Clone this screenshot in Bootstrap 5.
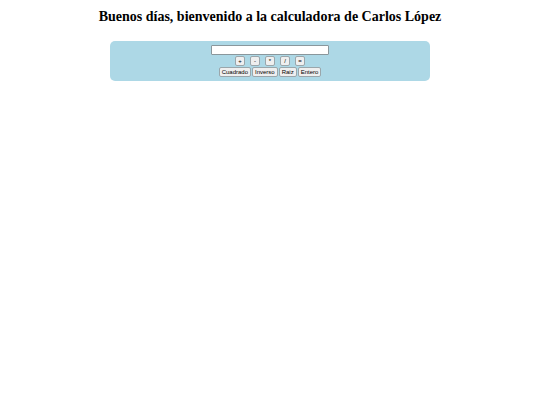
<!DOCTYPE html>
<html lang="es">

<head>
  <meta charset="UTF-8" />
  <title>Calculadora</title>
  <meta name="viewport" content="width=device-width, initial-scale=1" />
  <link rel="stylesheet" href="https://cdn.jsdelivr.net/npm/bootstrap@5.3.2/dist/css/bootstrap.min.css" />
  <style>
    body {
      background: #fff;
      color: #000;
      font-family: "Liberation Sans", Arial, sans-serif;
    }

    .titulo {
      font-family: "Liberation Serif", "Times New Roman", serif;
      font-size: 14px;
      font-weight: bold;
      line-height: 16px;
      padding-top: 9px;
      margin-bottom: 16px;
    }

    .calculadora {
      width: 320px;
      max-width: 100%;
      background: lightblue;
      border-radius: 5px;
      padding: 4px;
    }

    .filas {
      gap: 1px;
    }

    .operaciones {
      gap: 5px;
    }

    .funciones {
      gap: 1px;
    }

    .pantalla {
      width: 118px;
      height: 10px;
      font-size: 6px;
      background: #fff;
      border: 1px solid #8a979c;
      border-radius: 1px;
      padding: 0 1px;
    }

    .tecla {
      height: 10px;
      font-size: 6px;
      line-height: 8px;
      color: #000;
      background: #efefef;
      border: 1px solid #9aa6ab;
      border-radius: 2px;
      padding: 0 2px;
    }

    .operaciones .tecla {
      min-width: 10px;
    }
  </style>
</head>

<body>

  <h1 class="titulo text-center">Buenos días, bienvenido a la calculadora de Carlos López</h1>

  <div class="calculadora filas mx-auto d-flex flex-column align-items-center">
    <input type="text" id="pantalla" class="pantalla" aria-label="Número" />
    <div class="operaciones d-flex justify-content-center">
      <button type="button" class="tecla" data-op="+">+</button>
      <button type="button" class="tecla" data-op="-">-</button>
      <button type="button" class="tecla" data-op="*">*</button>
      <button type="button" class="tecla" data-op="/">/</button>
      <button type="button" class="tecla" id="igual">=</button>
    </div>
    <div class="funciones d-flex justify-content-center">
      <button type="button" class="tecla" data-fn="cuadrado">Cuadrado</button>
      <button type="button" class="tecla" data-fn="inverso">Inverso</button>
      <button type="button" class="tecla" data-fn="raiz">Raiz</button>
      <button type="button" class="tecla" data-fn="entero">Entero</button>
    </div>
  </div>

  <script src="https://cdn.jsdelivr.net/npm/bootstrap@5.3.2/dist/js/bootstrap.bundle.min.js"></script>
  <script>
    const pantalla = document.getElementById("pantalla");
    let anterior = 0;
    let operacion = "";

    const funciones = {
      cuadrado: n => n * n,
      inverso: n => 1 / n,
      raiz: n => Math.sqrt(n),
      entero: n => Math.trunc(n)
    };

    document.querySelectorAll("[data-op]").forEach(boton => {
      boton.addEventListener("click", () => {
        anterior = Number(pantalla.value);
        operacion = boton.dataset.op;
        pantalla.value = "";
      });
    });

    document.querySelectorAll("[data-fn]").forEach(boton => {
      boton.addEventListener("click", () => {
        pantalla.value = funciones[boton.dataset.fn](Number(pantalla.value));
      });
    });

    document.getElementById("igual").addEventListener("click", () => {
      const actual = Number(pantalla.value);
      if (operacion === "+") pantalla.value = anterior + actual;
      if (operacion === "-") pantalla.value = anterior - actual;
      if (operacion === "*") pantalla.value = anterior * actual;
      if (operacion === "/") pantalla.value = anterior / actual;
    });
  </script>

</body>

</html>
